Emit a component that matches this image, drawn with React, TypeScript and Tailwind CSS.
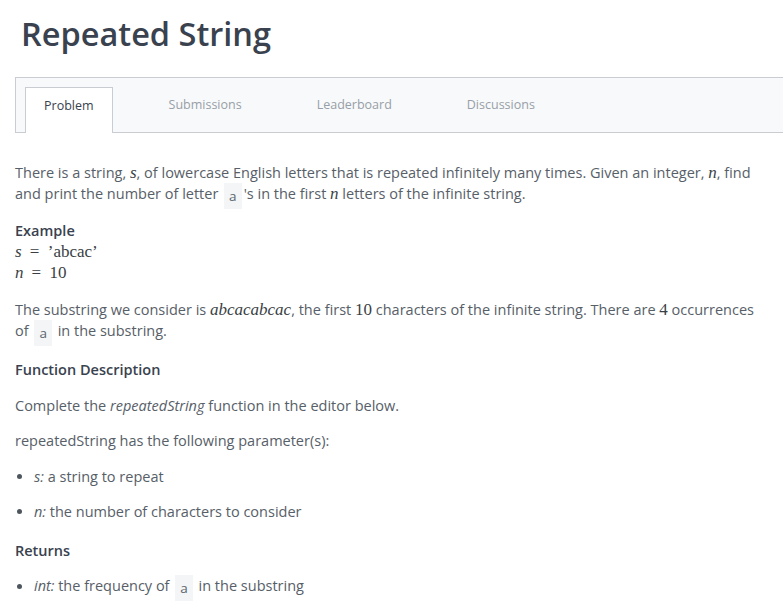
const sans = "font-['Open_Sans',_'Liberation_Sans',_sans-serif]";
const serif = "font-['Liberation_Serif',_'DejaVu_Serif',_serif] text-[17px]";

const M = ({ children, italic = true }: { children: React.ReactNode; italic?: boolean }) => (
  <span className={`${serif} ${italic ? "italic" : ""} text-[#3a3f45]`}>{children}</span>
);

const Code = ({ children }: { children: React.ReactNode }) => (
  <span className="bg-[#f3f5f7] px-[5px] py-[4px] mx-[2px] text-[13.5px] relative top-[2px] text-[#5b6670]">
    {children}
  </span>
);

const Bullet = ({ children }: { children: React.ReactNode }) => (
  <div className="flex items-center">
    <span className="w-[5px] h-[5px] rounded-full bg-[#4d565e] ml-[2px] mr-[12px]" />
    <span>{children}</span>
  </div>
);

const tabs = ["Problem", "Submissions", "Leaderboard", "Discussions"];

export default function App() {
  return (
    <div className={`${sans} bg-white w-[783px] h-[607px] overflow-hidden`}>
      <h1 className="text-[32.5px] leading-[46px] font-semibold text-[#39424e] pl-[21px] pt-[11px]">
        Repeated String
      </h1>
      <div className="ml-[15px] mt-[20px] border-y border-l border-[#c9ccd0] bg-[#f8f9fa] h-[56px] flex items-end gap-[37px] pl-[9px]">
        {tabs.map((t, i) => (
          <div
            key={t}
            className={
              i === 0
                ? "bg-white border-x border-t border-[#c9ccd0] px-[18px] h-[46px] pt-[9px] mb-[-1px] text-[12.5px] leading-[18px] font-medium text-[#39424e]"
                : "px-[19px] h-[45px] pt-[9px] text-[12.5px] leading-[18px] font-medium text-[#979fa8]"
            }
          >
            {t}
          </div>
        ))}
      </div>

      <div className="px-[15px] text-[14.5px] leading-[21px] text-[#576068]">
        <p className="mt-[29px]">
          There is a string, <M>s</M>, of lowercase English letters that is repeated infinitely many times. Given an
          integer, <M>n</M>, find and print the number of letter <Code>a</Code>'s in the first <M>n</M> letters of the
          infinite string.
        </p>

        <div className="mt-[15px] font-semibold text-[#39424e]">Example</div>
        <div>
          <M>s</M> <M italic={false}>&nbsp;=&nbsp; ’abcac’</M>
        </div>
        <div>
          <M>n</M> <M italic={false}>&nbsp;=&nbsp; 10</M>
        </div>

        <p className="mt-[16px]">
          The substring we consider is <M>abcacabcac</M>, the first <M italic={false}>10</M> characters of the infinite
          string. There are <M italic={false}>4</M> occurrences of <Code>a</Code> in the substring.
        </p>

        <div className="mt-[17px] font-semibold text-[#39424e]">Function Description</div>

        <p className="mt-[15px]">
          Complete the <i>repeatedString</i> function in the editor below.
        </p>

        <p className="mt-[14px]">repeatedString has the following parameter(s):</p>

        <div className="mt-[15px]">
          <Bullet>
            <i>s:</i> a string to repeat
          </Bullet>
        </div>
        <div className="mt-[14px]">
          <Bullet>
            <i>n:</i> the number of characters to consider
          </Bullet>
        </div>

        <div className="mt-[18px] font-semibold text-[#39424e]">Returns</div>

        <div className="mt-[14px]">
          <Bullet>
            <i>int:</i> the frequency of <Code>a</Code> in the substring
          </Bullet>
        </div>
      </div>
    </div>
  );
}
